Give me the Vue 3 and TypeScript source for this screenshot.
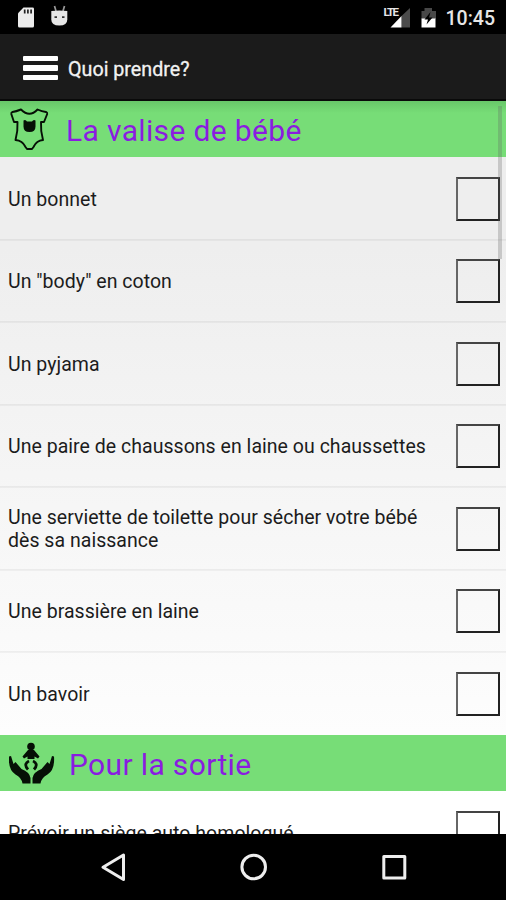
<script setup lang="ts">
interface Section {
  id: string
  title: string
  items: string[]
}

const sections: Section[] = [
  {
    id: 'valise',
    title: 'La valise de bébé',
    items: [
      'Un bonnet',
      'Un "body" en coton',
      'Un pyjama',
      'Une paire de chaussons en laine ou chaussettes',
      'Une serviette de toilette pour sécher votre bébé dès sa naissance',
      'Une brassière en laine',
      'Un bavoir',
    ],
  },
  { id: 'sortie', title: 'Pour la sortie', items: ['Prévoir un siège auto homologué'] },
]
</script>

<template>
  <div class="screen">
    <div class="status">
      <svg class="status-left" width="60" height="34" viewBox="0 0 60 34">
        <path d="M6.500 7.500H15.500q1.500 0 1.500 1.300V26q0 1.500-1.500 1.500H2.500Q1 27.500 1 26V13.200z" fill="#ececec" />
        <path d="M7.700 9.500v4M10.900 9.500v4M14.100 9.500v4" stroke="#222" stroke-width="1.700" />
        <path d="M37.500 6l1.500 5M47.500 6l-1.500 5" stroke="#999" stroke-width="1.700" />
        <path d="M34.300 11q8-1 16 0v8.500q0 6-8 6t-8-6z" fill="#e6e6e6" />
        <path d="M37.500 17.200h2.500M45 17.200h2.500" stroke="#333" stroke-width="1.800" />
      </svg>
      <div class="status-right">
        <svg width="56" height="34" viewBox="0 0 56 34">
          <path d="M27 8v19.500h-8.500V16z" fill="#4b4b4b" />
          <path d="M7.500 27.500h11V16z" fill="#fff" />
          <path d="M38.500 11h3V8h7.500v3h4V19H38.500z" fill="#484848" />
          <path d="M38.500 18.500h14V27.500H38.500z" fill="#fff" />
          <path d="M47.500 12l-6 7.500h3.500l-1.500 5 6-7h-3.500z" fill="#000" />
        </svg>
        <span class="lte">LTE</span>
        <span class="clock">10:45</span>
      </div>
    </div>

    <header class="bar">
      <span class="menu"><i /><i /><i /></span>
      <h1>Quoi prendre?</h1>
    </header>

    <main class="list">
      <section v-for="s in sections" :key="s.id">
        <h2 :class="s.id">
          <svg v-if="s.id === 'valise'" width="40" height="44" viewBox="0 0 40 44">
            <path d="M12 2.500Q7 4.500 3.500 5 2 5.500 2.300 7L5 15h3.500Q9 24 6.500 33 13.500 33.500 16.500 40l1.500 2h5l1.500-2Q27.500 33.500 34 33 31.500 24 32 15h3L38.200 7Q38.500 5.500 37 5 33 4.500 28.500 2.500 20.500 11 12 2.500z" fill="none" stroke="#061006" stroke-width="1.900" stroke-linejoin="round" />
            <path d="M14.500 13.500q2-1.500 3.500 1h5q1.500-2.500 3.500-1v6q0 5.500-6 5.500t-6-5.500z" fill="#061006" />
          </svg>
          <svg v-else width="46" height="42" viewBox="0 0 46 42">
            <circle cx="22" cy="4.500" r="3.800" />
            <path d="M19 8h6l5.500 6.500-1.500 2-3.500-2V17h-7v-2.500l-3.500 2-1.500-2z" />
            <path d="M20 19q-6 3-1 8.500M24 19q6 3 1 8.500" fill="none" stroke="#061006" stroke-width="2.800" />
            <path d="M0 14.500l2-.500 2.500 8 2-2 6 7q8 3 9 9v5.500H13.500q-1-6-7-9Q-1 28 0 14.500zM45 14.500l-2-.500-2.500 8-2-2-6 7q-8 3-9 9v5.500H31.500q1-6 7-9Q46 28 45 14.500z" />
          </svg>
          <span>{{ s.title }}</span>
        </h2>
        <ul>
          <li v-for="item in s.items" :key="item">
            <span class="label">{{ item }}</span>
            <span class="box" />
          </li>
        </ul>
      </section>
      <div class="thumb" />
    </main>

    <nav class="nav">
      <svg width="506" height="66" viewBox="0 0 506 66" fill="none" stroke="#eee" stroke-width="3" stroke-linejoin="round">
        <path d="M123.500 21v24.500L103 33.200z" />
        <circle cx="253.700" cy="33" r="11.800" />
        <rect x="383.800" y="22.500" width="21" height="21.500" />
      </svg>
    </nav>
  </div>
</template>

<style>
body { background: #000; }
</style>

<style scoped>
.screen { width: 506px; height: 900px; display: flex; flex-direction: column; overflow: hidden; background: #000; font-family: Roboto, sans-serif; }
.status { height: 34px; display: flex; justify-content: space-between; background: #000; }
.status-left { margin-left: 17px; }
.status-right { position: relative; display: flex; color: #e6e6e6; padding-right: 11px; }
.lte { position: absolute; left: 1px; top: 6px; font-size: 11.500px; line-height: 12px; font-weight: 700; letter-spacing: -1.500px; }
.clock { font-size: 19.500px; line-height: 37px; font-weight: 500; margin-left: 7px; }
.bar { height: 67px; box-sizing: border-box; flex: none; display: flex; align-items: center; background: #1b1b1b; border-bottom: 2px solid #0a0a0a; padding-left: 23px; }
.menu { width: 35px; display: flex; flex-direction: column; gap: 4px; margin: 3px 10px 0 0; }
.menu i { height: 5.400px; background: #fff; border-radius: 1px; }
h1 { margin: 5px 0 0; font-size: 19.700px; font-weight: 400; color: #f2f2f2; -webkit-text-stroke: 0.3px #f2f2f2; }
.list { position: relative; height: 733px; flex: none; overflow: hidden; background: linear-gradient(#eee, #eee 20%, #fff 95%); }
h2 { margin: 0; height: 56px; display: flex; align-items: center; background: #77dd77; color: #8a1ce0; font-size: 30px; font-weight: 400; letter-spacing: 0.350px; }
h2.valise { background: linear-gradient(#68c769, #77dd77 12px); padding-left: 9px; }
h2.valise svg { margin-right: 17px; }
h2.sortie { padding-left: 9px; }
h2.sortie svg { margin-right: 14px; fill: #061006; }
h2 span { white-space: nowrap; margin-top: 3px; }
ul { list-style: none; margin: 0; padding: 0; }
li { height: 82.500px; box-sizing: border-box; display: flex; align-items: center; justify-content: space-between; padding: 2px 6px 0 8px; border-bottom: 1px solid rgba(0, 0, 0, 0.05); }
li:last-child { border-bottom-color: transparent; height: 83px; }
li + li { box-shadow: inset 0 1px rgba(0, 0, 0, 0.04); }
.label { width: 424px; font-size: 19.500px; letter-spacing: 0.030px; line-height: 23px; color: #1c1c1c; margin-top: 1px; }
.box { width: 44px; height: 44px; box-sizing: border-box; border: 2px solid #222; border-left-color: #666; border-top-color: #444; }
.thumb { position: absolute; right: 4px; top: 5px; width: 4px; height: 153px; background: rgba(100, 100, 100, 0.28); }
.nav { height: 66px; flex: none; }
</style>
